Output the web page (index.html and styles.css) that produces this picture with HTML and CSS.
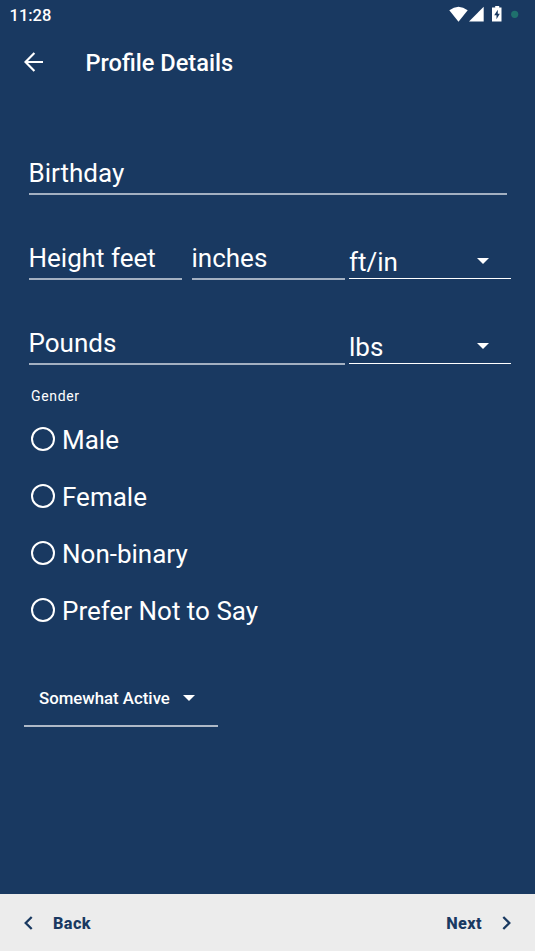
FILE: index.html
```html
<!DOCTYPE html>
<html lang="en">
<head>
<meta charset="utf-8">
<title>Profile Details</title>
<link rel="stylesheet" href="styles.css">
</head>
<body>
<div class="status">
  <span class="time">11:28</span>
  <svg width="90" height="30" viewBox="445 0 90 30" fill="#fff"><path d="M449.300 10.300Q458.500 3.200 467.700 10.300L458.500 21.700Z"/><path d="M469 21.500L483.700 6.800V21.500Z"/><path fill-rule="evenodd" d="M493 7.500h2.200V6h4v1.500h2.300V21.500H492V7.500zM497.800 9.700l-3.600 5.500h2.300v4l3.300-5.500h-2z"/><circle cx="514.700" cy="14.300" r="3.600" fill="#1f706d"/></svg>
</div>
<header class="appbar">
  <svg width="20" height="20" viewBox="0 0 20 20" fill="none" stroke="#fff" stroke-width="2.2"><path d="M19 10H1.500M10.400 1L1.500 10L10.400 19"/></svg>
  <h1>Profile Details</h1>
</header>
<main>
  <div class="field birthday">Birthday</div>
  <div class="row">
    <div class="field">Height feet</div>
    <div class="field">inches</div>
    <div class="select">ft/in<i class="caret"></i></div>
  </div>
  <div class="row weight">
    <div class="field">Pounds</div>
    <div class="select">lbs<i class="caret"></i></div>
  </div>
  <div class="legend">Gender</div>
  <div class="radios">
    <div class="radio"><i class="ring"></i><span>Male</span></div>
    <div class="radio"><i class="ring"></i><span>Female</span></div>
    <div class="radio"><i class="ring"></i><span>Non-binary</span></div>
    <div class="radio"><i class="ring"></i><span>Prefer Not to Say</span></div>
  </div>
  <div class="activity">Somewhat Active<i class="caret"></i></div>
</main>
<footer>
  <div class="nav"><svg width="9" height="14" viewBox="0 0 9 14" fill="none" stroke="#193961" stroke-width="2.300"><path d="M7.700 1L1.700 7l6 6"/></svg><span>Back</span></div>
  <div class="nav"><span>Next</span><svg width="9" height="14" viewBox="0 0 9 14" fill="none" stroke="#193961" stroke-width="2.300"><path d="M1.300 1l6 6-6 6"/></svg></div>
</footer>
</body>
</html>
```
FILE: styles.css
```css
* { box-sizing: border-box; }
body { margin: 0; width: 535px; height: 951px; background: #193961; color: #fff; font-family: Roboto, sans-serif; display: flex; flex-direction: column; overflow: hidden; }
.status { height: 30px; padding-left: 9.5px; display: flex; justify-content: space-between; align-items: center; }
.time { font-size: 16.5px; font-weight: 500; }
.appbar { height: 66px; padding: 0 0 2px 24px; display: flex; align-items: center; gap: 41.5px; }
h1 { margin: 2px 0 0; font-size: 23.6px; font-weight: 500; }
main { flex: 1; padding: 54px 24px 0; }
.field { height: 45px; border-bottom: 2px solid #a3b0c1; font-size: 26px; line-height: 46px; flex: 1; white-space: nowrap; }
.birthday { margin: 0 4.5px 40px; }
.row { display: flex; margin: 0 0 40px 4.5px; }
.row .field + .field { margin-left: 10px; }
.row.weight { margin-bottom: 23px; }
.select { width: 162px; height: 44px; margin-left: 4.5px; padding-right: 22px; border-bottom: 1px solid #fff; font-size: 26px; line-height: 54px; display: flex; justify-content: space-between; }
.caret { width: 12px; height: 6px; background: #fff; clip-path: polygon(0 0, 100% 0, 50% 100%); }
.select .caret { margin-top: 23px; }
.legend { margin-left: 7px; height: 16px; line-height: 16px; font-size: 14px; letter-spacing: .65px; }
.radios { padding: 6px 0 0 7px; }
.radio { height: 57px; display: flex; align-items: center; gap: 7px; font-size: 26px; }
.radio span { padding-top: 2px; }
.ring { width: 24px; height: 24px; border: 2.3px solid #fff; border-radius: 50%; }
.activity { width: 193.5px; height: 58px; margin-top: 31px; padding: 2px 22.5px 0 15px; border-bottom: 2px solid #aeb9c7; display: flex; align-items: center; justify-content: space-between; font-size: 16.8px; font-weight: 500; }
footer { height: 57px; background: #ececec; color: #193961; display: flex; justify-content: space-between; padding: 0 24px; align-items: center; font-size: 16.3px; font-weight: 800; letter-spacing: .4px; }
.nav { display: flex; gap: 20px; align-items: center; }
.nav span { padding-top: 2px; }
```
